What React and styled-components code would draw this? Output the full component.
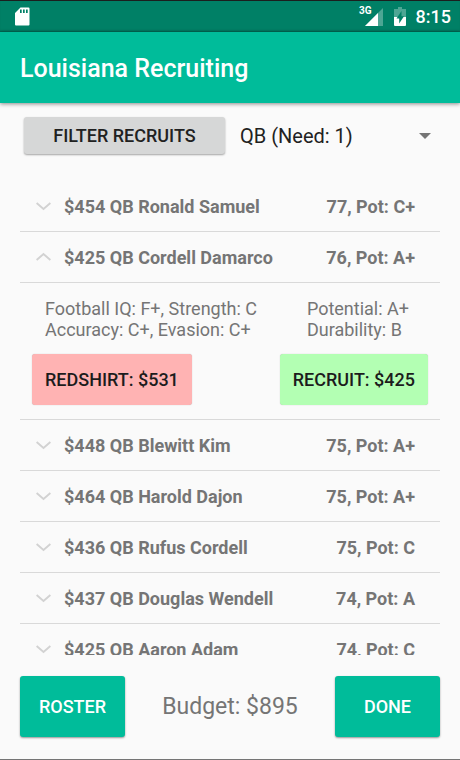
import React, { useState } from "react";
import styled, { createGlobalStyle } from "styled-components";

const GlobalStyle = createGlobalStyle`
  *, *::before, *::after { box-sizing: border-box; }
  body {
    margin: 0;
    background: #fafafa;
    font-family: Roboto, "Liberation Sans", sans-serif;
    color: #757575;
  }
  button, select { font: inherit; color: inherit; margin: 0; }
`;

const Screen = styled.div`
  display: flex;
  flex-direction: column;
  height: 100vh;
  border-bottom: 1px solid #757575;
`;

const StatusBar = styled.div`
  display: flex;
  align-items: center;
  flex: none;
  height: 32px;
  padding: 0 9px 0 15px;
  border-top: 1px solid #1b1f1e;
  background: #008066;
  box-shadow: inset 0 -2px 2px -1px rgba(0, 0, 0, 0.25);
  color: #fff;
`;

const StatusIcons = styled.div`
  display: flex;
  align-items: center;
  margin-left: auto;
`;

const NetworkLabel = styled.span`
  align-self: flex-start;
  font-size: 10px;
  font-weight: 700;
  line-height: 12px;
`;

const SignalIcon = styled.svg`
  margin-right: 11px;
  margin-left: -7px;
`;

const Clock = styled.time`
  margin-left: 10px;
  font-size: 18px;
  font-weight: 500;
  line-height: 24px;
`;

const AppBar = styled.header`
  display: flex;
  align-items: center;
  flex: none;
  height: 71px;
  padding: 3px 20px 0;
  background: #00bc9a;
  box-shadow: 0 1px 4px rgba(0, 0, 0, 0.45);
`;

const Title = styled.h1`
  margin: 0;
  color: #fff;
  font-size: 25px;
  font-weight: 500;
  line-height: 32px;
`;

const Main = styled.main`
  display: flex;
  flex: 1;
  flex-direction: column;
  min-height: 0;
  padding: 14px 20px 22px;
`;

const Toolbar = styled.div`
  display: grid;
  grid-template-columns: 1fr 1fr;
  gap: 14px;
  flex: none;
  padding-left: 4px;
  margin-bottom: 27px;
`;

const FilterButton = styled.button`
  height: 37px;
  border: 0;
  border-radius: 3px;
  background: #d6d7d7;
  box-shadow: 0 1px 2px rgba(0, 0, 0, 0.35);
  color: #212121;
  font-size: 18px;
  font-weight: 500;
  text-transform: uppercase;
`;

const Spinner = styled.label`
  display: flex;
  align-items: center;
  color: #212121;
`;

const SpinnerSelect = styled.select`
  flex: 1;
  min-width: 0;
  height: 37px;
  padding: 0 1px;
  border: 0;
  background: transparent;
  appearance: none;
  font-size: 20px;
`;

const SpinnerArrow = styled.svg`
  flex: none;
  margin-right: 9px;
  pointer-events: none;
`;

const RecruitList = styled.ul`
  flex: 1;
  min-height: 0;
  margin: 0;
  padding: 0;
  overflow-y: auto;
  scrollbar-width: none;
  list-style: none;
`;

const RecruitItem = styled.li`
  border-bottom: 1px solid #d9d9d9;
`;

const RecruitHeader = styled.button`
  display: flex;
  align-items: center;
  width: 100%;
  height: 50px;
  padding: 0 25px 0 16px;
  border: 0;
  background: transparent;
  font-size: 18px;
  font-weight: 700;
  text-align: left;
`;

const Chevron = styled.svg`
  flex: none;
  margin-right: 13px;
  transform: ${(p) => (p.$open ? "rotate(180deg)" : "none")};
`;

const Rating = styled.span`
  margin-left: auto;
`;

const Details = styled.div`
  padding: 0 12px 14px;
  border-top: 1px solid #d9d9d9;
`;

const Stats = styled.div`
  display: flex;
  justify-content: space-between;
  padding: 15px 19px 14px 13px;
  font-size: 18px;
  line-height: 21px;
`;

const StatColumn = styled.p`
  margin: 0;
  white-space: pre-line;
`;

const Actions = styled.div`
  display: flex;
  justify-content: space-between;
`;

const ActionButton = styled.button`
  height: 51px;
  padding: 0 13px;
  border: 0;
  border-radius: 3px;
  background: ${(p) => (p.$kind === "redshirt" ? "#ffb3b3" : "#b3ffb3")};
  box-shadow: 0 0 1px rgba(0, 0, 0, 0.3);
  color: #1c1c1c;
  font-size: 18px;
  font-weight: 500;
  text-transform: uppercase;
`;

const Footer = styled.footer`
  display: flex;
  align-items: center;
  justify-content: space-between;
  flex: none;
  margin-top: 21px;
`;

const FooterButton = styled.button`
  width: 105px;
  height: 61px;
  border: 0;
  border-radius: 3px;
  background: #00bc9a;
  box-shadow: 0 1px 2px rgba(0, 0, 0, 0.4);
  color: #fff;
  font-size: 18px;
  font-weight: 500;
  text-transform: uppercase;
`;

const Budget = styled.span`
  font-size: 23px;
  line-height: 28px;
`;

const recruits = [
  { cost: 454, name: "Ronald Samuel", rating: "77, Pot: C+" },
  {
    cost: 425,
    name: "Cordell Damarco",
    rating: "76, Pot: A+",
    skills: "Football IQ: F+, Strength: C\nAccuracy: C+, Evasion: C+",
    outlook: "Potential: A+\nDurability: B",
    redshirt: 531,
  },
  { cost: 448, name: "Blewitt Kim", rating: "75, Pot: A+" },
  { cost: 464, name: "Harold Dajon", rating: "75, Pot: A+" },
  { cost: 436, name: "Rufus Cordell", rating: "75, Pot: C" },
  { cost: 437, name: "Douglas Wendell", rating: "74, Pot: A" },
  { cost: 425, name: "Aaron Adam", rating: "74, Pot: C" },
];

function Recruit({ recruit, open, onToggle }) {
  return (
    <RecruitItem>
      <RecruitHeader type="button" aria-expanded={open} onClick={onToggle}>
        <Chevron $open={open} width="15" height="10" viewBox="0 0 15 10" aria-hidden="true">
          <path d="M.6 2 7.5 8 14.4 2" fill="none" stroke="#d2d2d2" strokeWidth="1.9" />
        </Chevron>
        <span>{`$${recruit.cost} QB ${recruit.name}`}</span>
        <Rating>{recruit.rating}</Rating>
      </RecruitHeader>
      {open && recruit.skills && (
        <Details>
          <Stats>
            <StatColumn>{recruit.skills}</StatColumn>
            <StatColumn>{recruit.outlook}</StatColumn>
          </Stats>
          <Actions>
            <ActionButton type="button" $kind="redshirt">{`Redshirt: $${recruit.redshirt}`}</ActionButton>
            <ActionButton type="button" $kind="recruit">{`Recruit: $${recruit.cost}`}</ActionButton>
          </Actions>
        </Details>
      )}
    </RecruitItem>
  );
}

export default function App() {
  const [openIndex, setOpenIndex] = useState(1);
  return (
    <>
      <GlobalStyle />
      <Screen>
        <StatusBar>
          <svg width="15" height="19" viewBox="0 0 15 19" aria-hidden="true">
            <path
              fill="#fff"
              fillRule="evenodd"
              d="M5.5.5H13.5Q14.5.5 14.5 1.5V17.5Q14.5 18.5 13.5 18.5H1Q0 18.5 0 17.5V6ZM5 2.5V6H6.7V2.5ZM8 2.5V6H9.7V2.5ZM11 2.5V6H12.7V2.5Z"
            />
          </svg>
          <StatusIcons>
            <NetworkLabel>3G</NetworkLabel>
            <SignalIcon width="18" height="18" viewBox="0 0 18 18" aria-hidden="true">
              <path d="M18 0V18H0Z" fill="#fff" fillOpacity=".3" />
              <path d="M13 5V18H0Z" fill="#fff" />
            </SignalIcon>
            <svg width="12" height="19" viewBox="0 0 12 19" aria-hidden="true">
              <path d="M4 0H8V2H12V10H0V2H4Z" fill="#fff" fillOpacity=".3" />
              <path d="M0 10H12V18Q12 19 11 19H1Q0 19 0 18Z" fill="#fff" />
              <path d="M7.5 4 2.5 11.5H5.2V16.5L10 9.2H7.5Z" fill="#008066" />
            </svg>
            <Clock>8:15</Clock>
          </StatusIcons>
        </StatusBar>
        <AppBar>
          <Title>Louisiana Recruiting</Title>
        </AppBar>
        <Main>
          <Toolbar>
            <FilterButton type="button">Filter Recruits</FilterButton>
            <Spinner>
              <SpinnerSelect aria-label="Position">
                <option>QB (Need: 1)</option>
              </SpinnerSelect>
              <SpinnerArrow width="12" height="6" viewBox="0 0 12 6" aria-hidden="true">
                <path d="M0 0H12L6 6Z" fill="#757575" />
              </SpinnerArrow>
            </Spinner>
          </Toolbar>
          <RecruitList>
            {recruits.map((recruit, i) => (
              <Recruit
                key={recruit.name}
                recruit={recruit}
                open={openIndex === i}
                onToggle={() => setOpenIndex(openIndex === i ? -1 : i)}
              />
            ))}
          </RecruitList>
          <Footer>
            <FooterButton type="button">Roster</FooterButton>
            <Budget>Budget: $895</Budget>
            <FooterButton type="button">Done</FooterButton>
          </Footer>
        </Main>
      </Screen>
    </>
  );
}
